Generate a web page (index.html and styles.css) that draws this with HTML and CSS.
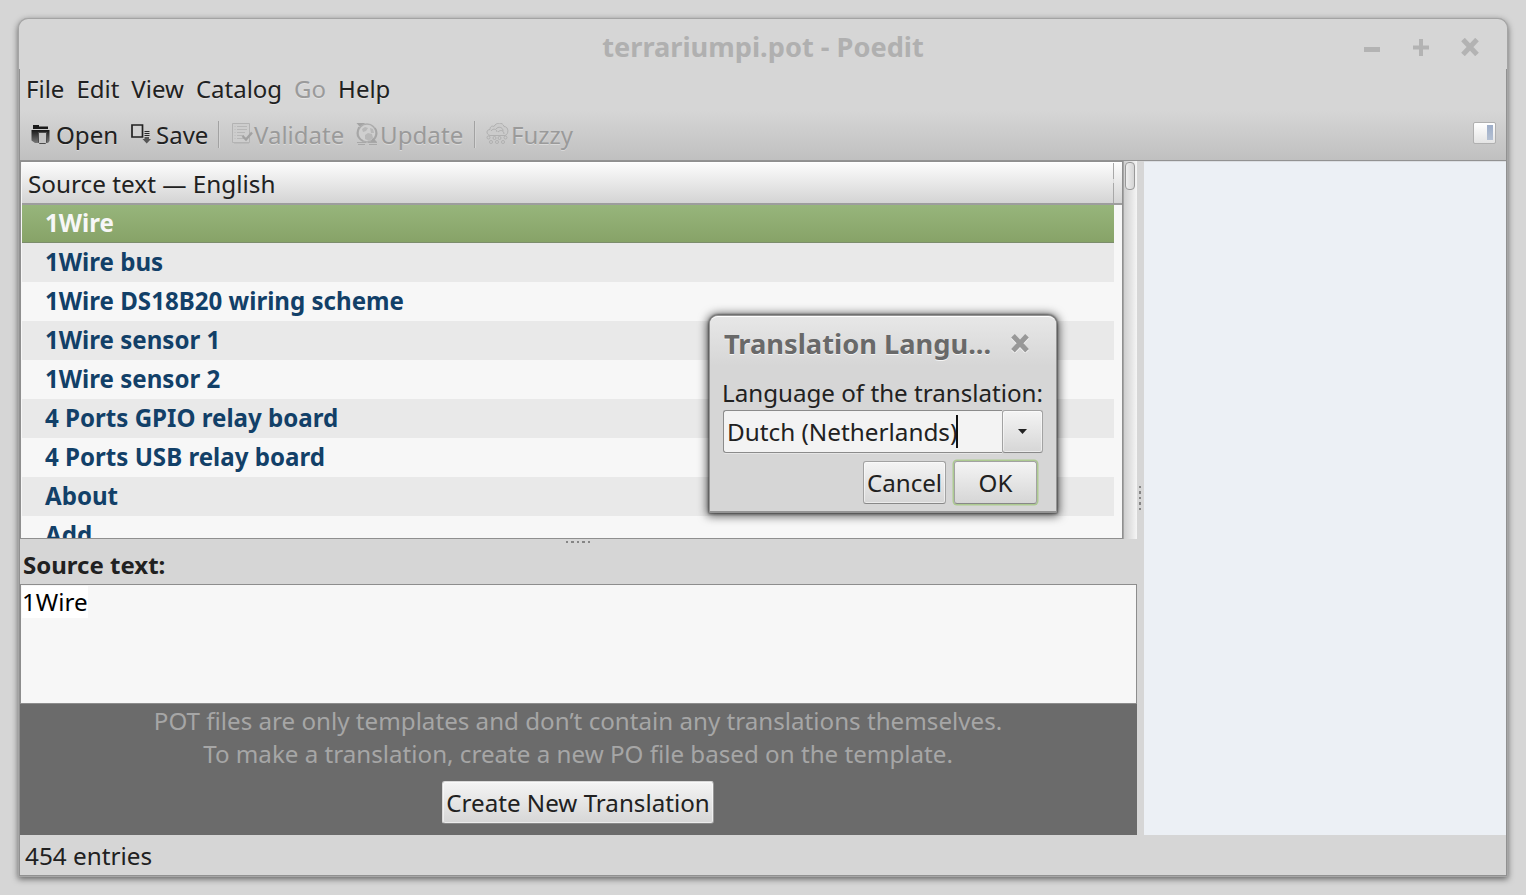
FILE: index.html
```html
<!DOCTYPE html>
<html lang="en">
<head>
<meta charset="utf-8">
<title>terrariumpi.pot - Poedit</title>
<link rel="stylesheet" href="styles.css">
</head>
<body>
<div class="window">
  <header class="titlebar">
    <h1 class="title">terrariumpi.pot - Poedit</h1>
    <div class="controls">
      <svg width="16" height="18" viewBox="0 0 16 18"><path d="M0 11.500H16" stroke-width="5"/></svg>
      <svg width="16" height="18" viewBox="0 0 16 18"><path d="M0 9.500H16M8 1V18" stroke-width="4"/></svg>
      <svg width="18" height="18" viewBox="0 0 18 18"><path d="M2 1.500L16 16.500M16 1.500L2 16.500" stroke-width="5"/></svg>
    </div>
  </header>
  <div class="frame">
    <nav class="menubar">
      <span>File</span><span>Edit</span><span>View</span><span>Catalog</span><span class="off">Go</span><span>Help</span>
    </nav>
    <div class="toolbar">
      <div class="tool open">
        <svg width="20" height="20" viewBox="0 0 20 20">
          <defs><linearGradient id="dark" x1="0" y1="0" x2="0" y2="1"><stop offset="0" stop-color="#181818"/><stop offset="1" stop-color="#777"/></linearGradient></defs>
          <path d="M2 0h6v1.500h9V4H2z" fill="#181818"/>
          <path d="M0.500 5h18v11l-1.500 2H4l-3.500-2.500z" fill="url(#dark)"/>
          <path d="M7.500 7.500h8v10l-1 1h-6l-1-1z" fill="#c4c4c4" stroke="#4c4c4c"/>
        </svg><span>Open</span>
      </div>
      <div class="tool save">
        <svg width="20" height="20" viewBox="0 0 20 20">
          <path d="M1 1h10.500v12H1z" fill="#d2d2d2" stroke="#222" stroke-width="1.700"/>
          <path d="M13.500 7.500h5M13.500 9.500h5M13.500 11.500h5" stroke="#282828" stroke-width="1"/>
          <path d="M13.500 13h4.500v2h2l-4.300 4.500L11.500 15h2z" fill="#555"/>
        </svg><span>Save</span>
      </div>
      <i class="sep"></i>
      <div class="tool validate off">
        <svg width="21" height="22" viewBox="0 0 21 22">
          <path d="M0.500 0.500h17v19h-17z" fill="#cdcdcd" stroke="#b3b3b3"/>
          <path d="M5 3.500h10M5 6.500h10M5 9.500h8M5 12.500h7M5 15.500h7" stroke="#b7b7b7"/>
          <path d="M3 3v13" stroke="#bababa" stroke-dasharray="1 2"/>
          <path d="M10.500 13l3.500 3.500 6-7" fill="none" stroke="#a2a2a2" stroke-width="2.400"/>
          <path d="M2 20.500h15" stroke="#bcbcbc"/>
        </svg><span>Validate</span>
      </div>
      <div class="tool update off">
        <svg width="22" height="23" viewBox="0 0 22 23">
          <circle cx="11" cy="10" r="9" fill="#cfcfcf" stroke="#adadad" stroke-width="1.500"/>
          <path d="M6 6l3-2 3 1-2 3-3 1zM14 5l3 1 1 4-3 0zM9 12l3-2 4 1 1 4-4 3-4-2z" fill="#b8b8b8"/>
          <path d="M3 4c-3 6-2 11 4 14M16 18c5-3 6-9 3-13" fill="none" stroke="#a6a6a6" stroke-width="1.600"/>
          <path d="M0.500 0h9l-6 3.500zM14 20l7-1-4-4z" fill="#a4a4a4"/>
          <path d="M1 19.500h9M12 19.500h9M2 21.500h7M13 21.500h8" stroke="#a8a8a8"/>
        </svg><span>Update</span>
      </div>
      <i class="sep"></i>
      <div class="tool fuzzy off">
        <svg width="23" height="22" viewBox="0 0 23 22" fill="#cbcbcb" stroke="#b0b0b0">
          <path d="M4 12.500c-4-1-4-6 0-6 0-3 2-4 4-3 2-4.500 9-4.500 10 0 5 0 5 8 1 9z"/>
          <path d="M5 8c2-3 6-2 6 1M10 6c2-3 7-2 7 2M12 9c3-3 6-1 6 2" fill="none"/>
          <circle cx="2.500" cy="14.500" r="1.500"/><circle cx="8.500" cy="15" r="1.500"/><circle cx="13.500" cy="15" r="1.500"/><circle cx="19.500" cy="14.500" r="1.500"/>
          <circle cx="5" cy="19" r="1.500"/><circle cx="11" cy="19" r="1.500"/><circle cx="17" cy="19" r="1.500"/>
        </svg><span>Fuzzy</span>
      </div>
      <i class="side-toggle"><b></b></i>
    </div>
    <main class="content">
      <section class="left">
        <div class="list-area">
          <div class="table">
            <div class="thead"><span>Source text — English</span><i></i></div>
            <ul class="rows">
              <li class="sel">1Wire</li>
              <li>1Wire bus</li>
              <li>1Wire DS18B20 wiring scheme</li>
              <li>1Wire sensor 1</li>
              <li>1Wire sensor 2</li>
              <li>4 Ports GPIO relay board</li>
              <li>4 Ports USB relay board</li>
              <li>About</li>
              <li>Add</li>
            </ul>
          </div>
          <div class="scroll"><i></i></div>
        </div>
        <div class="grip-h"><i></i><i></i><i></i><i></i><i></i></div>
        <h2 class="label">Source text:</h2>
        <div class="source"><span>1Wire</span></div>
        <div class="notice">
          <p>POT files are only templates and don’t contain any translations themselves.</p>
          <p>To make a translation, create a new PO file based on the template.</p>
          <button class="btn create">Create New Translation</button>
        </div>
      </section>
      <div class="grip-v"><i></i><i></i><i></i><i></i><i></i></div>
      <aside class="sidebar"></aside>
    </main>
    <footer class="status">454 entries</footer>
  </div>
</div>

<div class="dialog">
  <header class="dlg-title">
    <h3>Translation Langu...</h3>
    <svg width="18" height="19" viewBox="0 0 18 19"><path d="M2 3L16 18M16 3L2 18" stroke="#f2f2f2" stroke-width="5"/><path d="M2 1.800L16 16.800M16 1.800L2 16.800" stroke="#989898" stroke-width="5"/></svg>
  </header>
  <div class="dlg-body">
    <label>Language of the translation:</label>
    <div class="combo">
      <div class="field"><span>Dutch (Netherlands)</span><i></i></div>
      <button class="btn drop"><svg width="9" height="5" viewBox="0 0 9 5"><path d="M0 0h9L4.500 5z" fill="#222"/></svg></button>
    </div>
    <div class="actions"><button class="btn cancel">Cancel</button><button class="btn ok">OK</button></div>
  </div>
</div>
</body>
</html>
```
FILE: styles.css
```css
* { box-sizing: border-box; }
html, body { height: 100%; }
body {
  margin: 0; padding: 18px 18px 17px; overflow: hidden;
  background: #d6d6d6; color: #212121;
  font: 24.17px/33px "Noto Sans", sans-serif;
}
h1, h2, h3, p, ul { margin: 0; padding: 0; list-style: none; }
svg { flex: none; display: block; }
span, h1, h2, h3, p, label, li { white-space: nowrap; }

.window { width: 1490px; height: 859px; border-radius: 10px 10px 0 0; box-shadow: 0 2px 6px rgba(0,0,0,.55); background: #a6a6a6; }
.titlebar {
  position: relative; height: 51px; background: #d6d6d6; border: 1px solid #a4a4a4; border-bottom: 0;
  border-radius: 10px 10px 0 0; display: flex; justify-content: center; padding-top: 10px;
}
.title { font-size: 27.2px; line-height: 36px; color: #b0b0b0; font-weight: 700; }
.controls { position: absolute; right: 28px; top: 19px; display: flex; gap: 33px; stroke: #b3b3b3; }
.controls svg:last-child { margin-left: -1px; }
.frame { margin: 0 1px; height: 807px; border: solid #919191; border-width: 0 1px 1px; background: #d6d6d6; }

.menubar { height: 41px; padding: 3px 0 0 6px; display: flex; gap: 12px; font-size: 24px; text-shadow: 0 1px rgba(255,255,255,.35); }
.off { color: #9a9a9a; }
.toolbar {
  height: 51px; display: flex; padding: 8px 10px 0 11px;
  background: linear-gradient(#d6d6d6, #c0c0c0); border-bottom: 1px solid #929292;
  text-shadow: 0 1px rgba(255,255,255,.35);
}
.tool { display: flex; }
.tool svg { margin-top: 6px; }
.open { width: 100px; gap: 5px; }
.open svg { margin-top: 7px; }
.save { width: 87px; gap: 5px; font-size: 24px; }
.sep { width: 1px; height: 27px; margin-top: 3px; background: #a2a2a2; box-shadow: 1px 0 #d4d4d4; }
.validate { width: 124px; margin-left: 13px; gap: 1px; font-size: 24px; }
.validate svg, .update svg, .fuzzy svg { margin-top: 5px; }
.update { width: 118px; gap: 2px; }
.fuzzy { margin-left: 11px; gap: 2px; font-size: 24px; }
.side-toggle { margin: 4px 0 0 auto; width: 23px; height: 22px; border: 1px solid #b0b0b0; border-radius: 2px; background: linear-gradient(#fff, #e4e4e4); padding: 2px; display: flex; justify-content: flex-end; }
.side-toggle b { width: 6px; height: 15px; background: linear-gradient(#9dadc8, #b5c1d3); }

.content { height: 674px; display: flex; }
.left { width: 1117px; display: flex; flex-direction: column; }
.list-area { height: 378px; display: flex; }
.table { width: 1103px; border: 1px solid #8f8f8f; background: #f7f7f7; overflow: hidden; padding-left: 1px; }
.thead { height: 43px; display: flex; justify-content: space-between; padding: 4px 8px 0 6px; font-size: 24.3px; background: linear-gradient(#fcfcfc, #d4d4d4); border-top: 1px solid #fff; border-bottom: 2px solid #9d9d9d; }
.thead i { width: 1px; height: 40px; margin-top: -4px; background: linear-gradient(#a8a8a8 16px, #ddd 16px, #ddd 20px, #a8a8a8 20px); }
.rows { width: 1092px; }
.rows li { height: 39px; padding: 3px 0 0 23px; font-size: 24.1px; line-height: 32px; font-weight: 700; color: #124068; background: #f7f7f7; }
.rows li:nth-child(even) { background: #e9e9e9; }
.rows li.sel { height: 38px; padding-top: 2px; color: #f7f7f7; background: linear-gradient(#97b57b, #87a368); border-bottom: 1px solid #7c8d6c; }
.scroll { width: 14px; background: linear-gradient(90deg, #a5a5a5 1px, #cfcfcf 1px, #f5f5f5); padding: 1px 2px 0; }
.scroll i { display: block; width: 10px; height: 28px; border: 1px solid #999; border-radius: 4px; background: linear-gradient(90deg, #eee, #d5d5d5); }
.grip-h { height: 9px; display: flex; gap: 3px; padding: 2px 0 0 546px; }
.grip-h i { width: 2px; height: 2px; background: #858585; }
.grip-h i:nth-child(even) { width: 3px; }
.label { height: 36px; padding-left: 3px; font-size: 24px; font-weight: 700; }
.source { height: 119px; border: 1px solid #8d8d8d; border-width: 1px 1px 0; background: #f7f7f7; padding: 1px; color: #000; display: flex; align-items: flex-start; }
.source span { background: #fff; height: 32px; line-height: 31px; }
.notice { height: 132px; border-top: 1px solid #8d8d8d; background: #6b6b6b; color: #a6a6a6; display: flex; flex-direction: column; align-items: center; padding-right: 1px; }
.btn {
  font: inherit; color: #212121; padding: 0; text-align: center; white-space: nowrap;
  border: 1px solid #a2a2a2; border-bottom-color: #888; border-radius: 3px;
  background: linear-gradient(#f4f4f4, #d6d6d6); box-shadow: inset 0 0 0 1px rgba(255,255,255,.5);
}
.create { width: 272px; height: 43px; margin-top: 11px; border-color: #d9d9d9 #999 #888 #d9d9d9; }
.grip-v { width: 7px; padding: 325px 0 0 2px; display: flex; flex-direction: column; gap: 3px; }
.grip-v i { width: 2px; height: 2px; background: #858585; }
.grip-v i:nth-child(even) { height: 3px; }
.sidebar { flex: 1; background: #ecf0f5; border-top: 1px solid #dcdfe3; }
.status { height: 40px; padding: 4px 0 0 5px; font-size: 24.3px; }

/* Modal floats above the main window */
.dialog { position: absolute; left: 709px; top: 315px; width: 348px; height: 198px; border-radius: 9px 9px 1px 1px; border: 1px solid #949494; border-bottom-width: 2px; background: #d6d6d6; box-shadow: 0 0 2px 1px rgba(0,0,0,.4), 0 1px 10px 2px rgba(0,0,0,.65); }
.dlg-title { height: 50px; border-radius: 8px 8px 0 0; background: linear-gradient(#e7e7e7, #d6d6d6); border-top: 1px solid #fff; display: flex; justify-content: space-between; padding: 9px 27px 0 14px; }
.dlg-title h3 { font-size: 27.25px; line-height: 36px; color: #696969; text-shadow: 0 1px #f5f5f5; }
.dlg-title svg { margin-top: 8px; }
.dlg-body { padding: 10px 13px 0 13px; }
.dlg-body label { display: block; height: 34px; margin-left: -1px; }
.combo { display: flex; height: 43px; }
.field { flex: 1; display: flex; border: 1px solid #8b8b8b; border-right: 0; border-radius: 3px 0 0 3px; background: #f3f3f3; padding: 4px 0 0 3px; font-size: 24.3px; box-shadow: 0 1px #e6e6e6; }
.field i { width: 2px; height: 33px; margin-left: -1px; background: #111; }
.drop { width: 41px; display: flex; justify-content: center; align-items: center; }
.actions { display: flex; justify-content: flex-end; gap: 8px; padding: 8px 6px 0 0; }
.cancel { width: 83px; height: 43px; }
.ok { width: 83px; height: 43px; box-shadow: 0 0 0 1.500px #adca91; }
```
